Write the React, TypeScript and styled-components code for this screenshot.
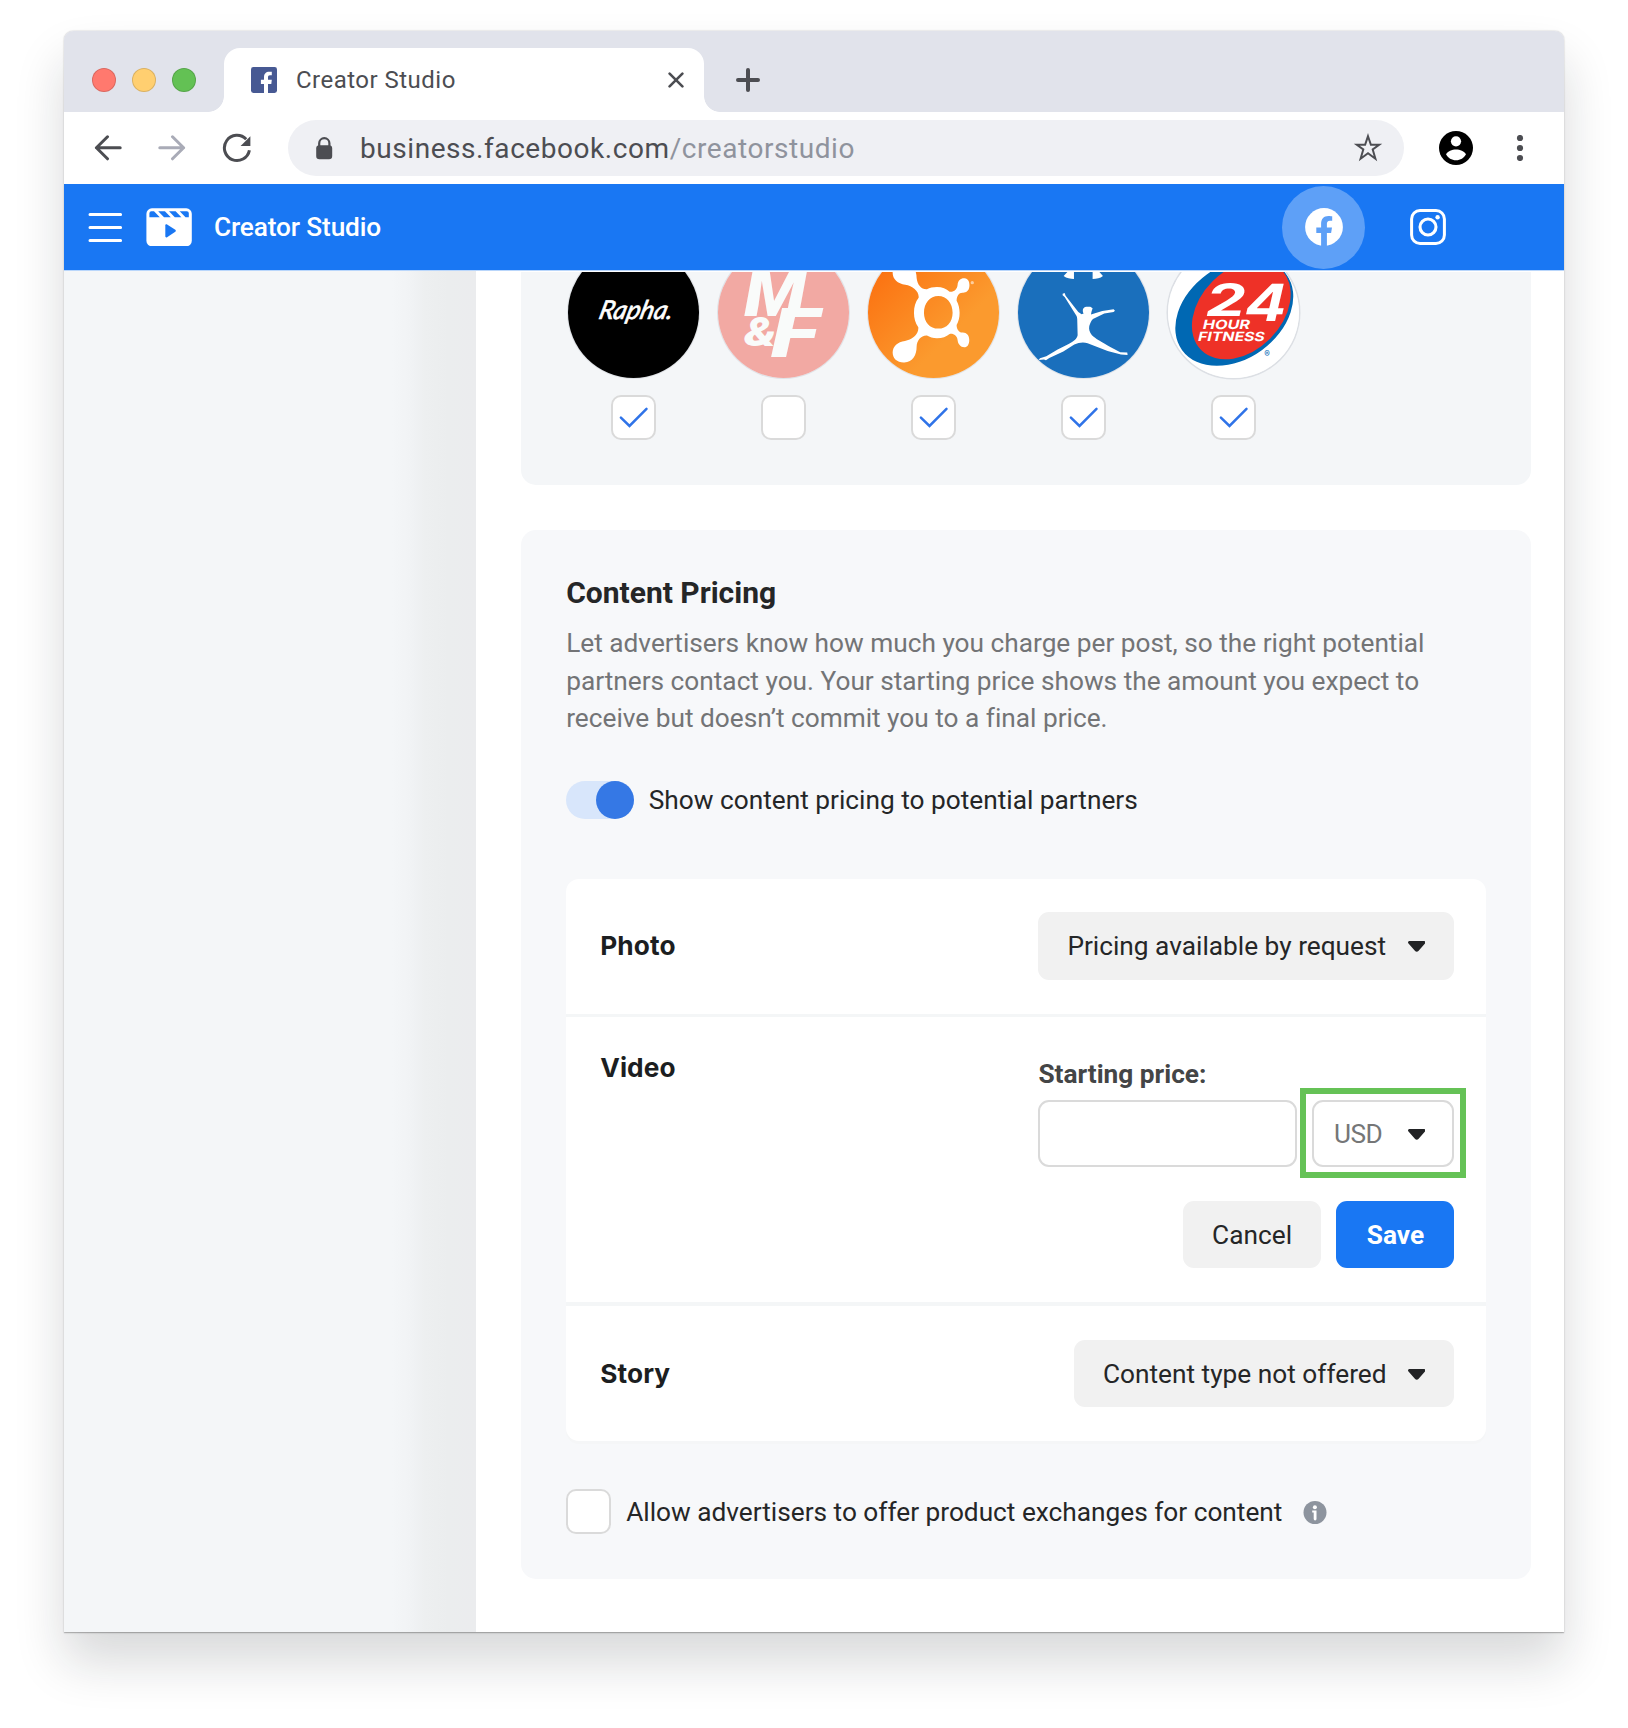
import React from "react";
import styled, { createGlobalStyle, css } from "styled-components";

const GlobalStyle = createGlobalStyle`
  *, *::before, *::after { box-sizing: border-box; }
  html, body { margin: 0; padding: 0; background: #fff; }
  body { font-family: Roboto, "Liberation Sans", sans-serif; color: #252627; overflow: hidden; }
  svg { display: block; flex: none; }
`;

const Page = styled.div`
  width: 1628px;
  height: 1728px;
  padding: 31px 64px 0;
  overflow: hidden;
  background: #fff;
`;

const BrowserWindow = styled.div`
  display: flex;
  flex-direction: column;
  width: 1500px;
  height: 1601px;
  border-radius: 9px 9px 0 0;
  background: #fff;
  box-shadow: 0 0.5px 1.5px rgba(0, 0, 0, 0.32), 0 30px 50px rgba(20, 24, 28, 0.165);
`;

/* ---------- browser chrome ---------- */

const TabStrip = styled.div`
  display: flex;
  height: 81px;
  flex: none;
  padding-top: 17px;
  background: #e1e3eb;
  border-radius: 9px 9px 0 0;
`;

const TrafficLights = styled.div`
  display: flex;
  align-items: center;
  gap: 16px;
  width: 160px;
  padding-left: 28px;
`;

const Light = styled.span<{ $color: string }>`
  width: 24px;
  height: 24px;
  border-radius: 50%;
  background: ${(p) => p.$color};
  border: 1px solid rgba(0, 0, 0, 0.14);
`;

const Tab = styled.div`
  position: relative;
  display: flex;
  align-items: center;
  width: 480px;
  padding: 0 20px 0 27px;
  background: #fff;
  border-radius: 16px 16px 0 0;
  color: #4c4d52;

  &::before,
  &::after {
    content: "";
    position: absolute;
    bottom: 0;
    width: 16px;
    height: 16px;
  }
  &::before {
    left: -16px;
    background: radial-gradient(circle at 0 0, transparent 15.5px, #fff 16.2px);
  }
  &::after {
    right: -16px;
    background: radial-gradient(circle at 100% 0, transparent 15.5px, #fff 16.2px);
  }
`;

const TabTitle = styled.span`
  flex: 1;
  margin-left: 19px;
  font-size: 24px;
  line-height: 30px;
  letter-spacing: 0.48px;
`;

const NewTab = styled.div`
  display: flex;
  align-items: center;
  padding-left: 32px;
`;

const Toolbar = styled.div`
  display: flex;
  align-items: center;
  flex: none;
  height: 72px;
  padding: 0 38px 0 30px;
  background: #fff;
`;

const NavButtons = styled.div`
  display: flex;
  align-items: center;
  gap: 36px;
  width: 194px;
`;

const AddressBar = styled.div`
  display: flex;
  align-items: center;
  width: 1116px;
  height: 56px;
  padding: 0 21px 0 28px;
  border-radius: 28px;
  background: #eff0f4;
`;

const Url = styled.span`
  flex: 1;
  margin: 1px 0 0 27px;
  font-size: 28px;
  line-height: 36px;
  letter-spacing: 0.56px;
  color: #4c4d52;
`;

const UrlPath = styled.span`
  color: #8f939d;
`;

const ToolbarEnd = styled.div`
  display: flex;
  align-items: center;
  justify-content: space-between;
  flex: 1;
  padding-left: 35px;
`;

/* ---------- application header ---------- */

const AppHeader = styled.header`
  display: flex;
  align-items: center;
  flex: none;
  height: 87px;
  padding: 0 118px 0 24px;
  background: #1977f3;
  border-bottom: 1px solid #b9d6fb;
  color: #fff;
`;

const MenuButton = styled.div`
  margin-right: 23px;
`;

const AppTitle = styled.span`
  flex: 1;
  margin-left: 22px;
  font-size: 26.25px;
  font-weight: 500;
  letter-spacing: -0.15px;
`;

const ActiveChannel = styled.div`
  display: flex;
  align-items: center;
  justify-content: center;
  width: 83px;
  height: 83px;
  margin-right: 45px;
  border-radius: 50%;
  background: #5ea0f7;
`;

/* ---------- application body ---------- */

const AppBody = styled.div`
  display: flex;
  flex: 1;
  min-height: 0;
  overflow: hidden;
`;

const Sidebar = styled.aside`
  width: 412px;
  flex: none;
  background: linear-gradient(
    to right,
    #f4f6f8 328px,
    #f1f3f5 346px,
    #edeff0 361px,
    #ebedee 384px,
    #ebecee 100%
  );
`;

const Main = styled.main`
  flex: 1;
  margin-top: 1px;
  padding: 0 32.6px 0 45.2px;
  overflow: hidden;
`;

const BrandPanel = styled.section`
  display: flex;
  gap: 18.75px;
  height: 283px;
  margin-top: -70.3px;
  padding: 45px 47px 45px 46.4px;
  border-radius: 15px;
  background: #f4f6f8;
`;

const Brand = styled.div`
  display: flex;
  flex-direction: column;
  align-items: center;
  gap: 17px;
`;

const BrandLogo = styled.div<{ $ringed?: boolean }>`
  width: 131.25px;
  height: 131.25px;
  border-radius: 50%;
  box-shadow: 0 0 0 ${(p) => (p.$ringed ? "1.5px #dcdfe4" : "1px #e0e3e8")};

  svg {
    width: 100%;
    height: 100%;
    border-radius: 50%;
  }
`;

const CheckboxBox = styled.span`
  display: flex;
  flex: none;
  width: 45px;
  height: 45px;
  border: 2px solid #dadada;
  border-radius: 10px;
  background: #fff;
`;

const PricingPanel = styled.section`
  margin-top: 45.3px;
  height: 1049px;
  padding: 45px;
  border-radius: 15px;
  background: #f7f8fa;
`;

const PanelTitle = styled.h2`
  margin: 0;
  font-size: 30px;
  font-weight: 700;
  line-height: 36px;
`;

const PanelText = styled.p`
  margin: 14px 0 0;
  font-size: 26.25px;
  line-height: 37.5px;
  letter-spacing: -0.01px;
  color: #737476;
  white-space: nowrap;
`;

const ToggleRow = styled.div`
  display: flex;
  align-items: center;
  gap: 15px;
  height: 38px;
  margin-top: 43.5px;
  font-size: 26.25px;
`;

const ToggleTrack = styled.span`
  display: flex;
  justify-content: flex-end;
  width: 67.5px;
  height: 38px;
  border-radius: 19px;
  background: #d8e6fb;
`;

const ToggleKnob = styled.span`
  width: 38px;
  height: 38px;
  border-radius: 50%;
  background: #3578e5;
`;

const PriceTable = styled.div`
  margin-top: 59.5px;
  border-radius: 13px;
  background: #fff;
  box-shadow: 0 3px 0 #f5f6f7;
`;

const PriceRow = styled.div<{ $open?: boolean }>`
  display: flex;
  justify-content: space-between;
  align-items: ${(p) => (p.$open ? "flex-start" : "center")};
  height: ${(p) => (p.$open ? 285 : 135)}px;
  padding: ${(p) => (p.$open ? "36px" : "0")} 32px 0 34px;
`;

const Divider = styled.div`
  height: 3.75px;
  background: #f4f6f7;
`;

const RowLabel = styled.span`
  font-family: Inter, Roboto, sans-serif;
  font-size: 26.25px;
  font-weight: 700;
  line-height: 30px;
  letter-spacing: 0.1px;
  color: #1c1e21;
`;

const buttonBase = css`
  display: flex;
  align-items: center;
  height: 67.5px;
  padding: 0 29px;
  border: 0;
  border-radius: 11px;
  font-family: inherit;
  font-size: 26.25px;
  white-space: nowrap;
`;

const DropdownButton = styled.button<{ $width: number }>`
  ${buttonBase}
  justify-content: space-between;
  width: ${(p) => p.$width}px;
  background: #f1f1f1;
  color: #252627;
`;

const ActionButton = styled.button<{ $primary?: boolean }>`
  ${buttonBase}
  justify-content: center;
  width: ${(p) => (p.$primary ? 118 : 138.7)}px;
  padding: 0;
  background: ${(p) => (p.$primary ? "#1977f3" : "#f1f1f1")};
  color: ${(p) => (p.$primary ? "#fff" : "#252627")};
  font-weight: ${(p) => (p.$primary ? 700 : 400)};
`;

const PriceForm = styled.div`
  width: 416px;
  padding-top: 5.7px;
`;

const FieldLabel = styled.div`
  font-size: 26.25px;
  font-weight: 700;
  line-height: 30px;
  color: #444546;
`;

const FieldRow = styled.div`
  display: flex;
  gap: 15px;
  margin-top: 11px;
`;

const fieldBorder = css`
  height: 67.5px;
  border: 2px solid #dadada;
  border-radius: 11px;
  background: #fff;
`;

const PriceInput = styled.input`
  ${fieldBorder}
  width: 258.5px;
  padding: 0 20px;
  font: inherit;
`;

const CurrencySelect = styled.div`
  ${fieldBorder}
  position: relative;
  display: flex;
  align-items: center;
  justify-content: space-between;
  width: 142.5px;
  padding: 0 27px 0 20px;
  font-size: 26.25px;
  letter-spacing: -0.5px;
  color: #757677;

  &::after {
    content: "";
    position: absolute;
    inset: -13.6px -13.4px -12.6px -14px;
    border: 6px solid #65c256;
  }
`;

const FormActions = styled.div`
  display: flex;
  justify-content: flex-end;
  gap: 15px;
  margin-top: 33.5px;
`;

const ExchangeRow = styled.label`
  display: flex;
  align-items: center;
  margin-top: 48.4px;
  font-size: 26.25px;
`;

const ExchangeText = styled.span`
  margin: 1px 21px 0 15px;
  letter-spacing: -0.01px;
`;

/* ---------- icons ---------- */

const FacebookTile = () => (
  <svg width="26" height="26" viewBox="0 0 26 26">
    <rect width="26" height="26" rx="2.4" fill="#475993" />
    <path
      d="M13 26V16.9H9.9V12.7H13V10.2C13 6.6 15 4.7 18.2 4.7H20.8V8.3H19C17.5 8.3 17 9 17 10.4V12.7H20.8L20.3 16.9H17V26Z"
      fill="#fff"
    />
  </svg>
);

const CloseIcon = () => (
  <svg width="16" height="16" viewBox="0 0 16 16" stroke="#4c4d52" strokeWidth="2.6" strokeLinecap="round">
    <path d="M1.6 1.6L14.4 14.4M14.4 1.6L1.6 14.4" />
  </svg>
);

const PlusIcon = () => (
  <svg width="24" height="24" viewBox="0 0 24 24" stroke="#4c4d52" strokeWidth="4" strokeLinecap="round">
    <path d="M2 12H22M12 2V22" />
  </svg>
);

const ArrowIcon = ({ color, flip }: { color: string; flip?: boolean }) => (
  <svg width="28" height="26" viewBox="0 0 28 26" fill="none" stroke={color} strokeWidth="3" strokeLinecap="round" strokeLinejoin="round">
    <path
      d="M13.5 1.8L2.4 12.8L13.5 23.8M2.4 12.8H26.2"
      transform={flip ? "translate(28 0) scale(-1 1)" : undefined}
    />
  </svg>
);

const ReloadIcon = () => (
  <svg width="30" height="30" viewBox="0 0 30 30">
    <path d="M27.4 17.2A12.6 12.6 0 1 1 24.2 6.3" fill="none" stroke="#4c4d52" strokeWidth="3" />
    <path d="M28.4 3.2V13H18.6Z" fill="#4c4d52" />
  </svg>
);

const LockIcon = () => (
  <svg width="17" height="23" viewBox="0 0 17 23">
    <path d="M3.2 9V6.3a5.1 5.1 0 0 1 10.2 0V9" fill="none" stroke="#4c4d52" strokeWidth="2.2" />
    <rect x="0.2" y="8.3" width="16" height="14" rx="3.2" fill="#4c4d52" />
  </svg>
);

const StarIcon = () => (
  <svg width="30" height="31" viewBox="0 0 30 31">
    <path
      d="M15 3.2L17.9 11.7H26.2L19.7 16.5L22.4 25.7L15 20.3L7.6 25.7L10.3 16.5L3.8 11.7H12.1Z"
      fill="none"
      stroke="#4c4d52"
      strokeWidth="2"
    />
  </svg>
);

const AccountIcon = () => (
  <svg width="34" height="34" viewBox="0 0 34 34">
    <circle cx="17" cy="17" r="17" fill="#000" />
    <circle cx="17" cy="10.3" r="5.1" fill="#fff" />
    <path d="M7 23.2C8.6 20 13 18.4 17 18.4S25.4 20 27 23.2C25 26.9 21.4 29.2 17 29.2S9 26.9 7 23.2Z" fill="#fff" />
  </svg>
);

const DotsIcon = () => (
  <svg width="12" height="26" viewBox="0 0 12 26" fill="#4c4d52">
    <circle cx="6" cy="3" r="3.1" />
    <circle cx="6" cy="13" r="3.1" />
    <circle cx="6" cy="23" r="3.1" />
  </svg>
);

const MenuIcon = () => (
  <svg width="35" height="30" viewBox="0 0 35 30" stroke="#fff" strokeWidth="3" strokeLinecap="round">
    <path d="M2 2.5H32.6M2 15.5H32.6M2 28.5H32.6" />
  </svg>
);

const ClapperIcon = () => (
  <svg width="46" height="38" viewBox="-.4 -.3 46 38">
    <rect width="45.4" height="38" rx="5.5" fill="#fff" />
    <path
      d="M5 3H7.6L13.4 8.9H3V5A2 2 0 0 1 5 3ZM11.8 3H18.5L24.4 8.9H17.6ZM22.6 3H29.2L35 8.9H28.4ZM33.3 3H40.4A2 2 0 0 1 42.4 5V8.9H39.1Z"
      fill="#1977f3"
    />
    <path d="M18.9 17.1C18.9 16.1 19.8 15.6 20.7 16.1L28.9 21.5C29.6 22 29.6 23 28.9 23.5L20.7 28.9C19.8 29.4 18.9 28.9 18.9 27.9Z" fill="#1977f3" />
  </svg>
);

const FacebookRound = () => (
  <svg width="38" height="38" viewBox="0 0 38 38">
    <circle cx="19" cy="19" r="18.9" fill="#fff" />
    <path
      d="M16.1 38V25.1H11.3V19.4H16.1V15.6C16.1 10.6 19 7.9 23.4 7.9C25.3 7.9 27.2 8.3 27.2 8.3V12.7H25C22.5 12.7 21.9 14.2 21.9 15.8V19.4H27L26.1 25.1H21.9V38Z"
      fill="#5ea0f7"
    />
  </svg>
);

const InstagramIcon = () => (
  <svg width="36" height="36" viewBox="0 0 36 36" fill="none" stroke="#fff" strokeWidth="3">
    <rect x="1.6" y="1.6" width="32.8" height="32.8" rx="8.4" />
    <circle cx="18" cy="18" r="8" strokeWidth="3.1" />
    <circle cx="27.6" cy="8.3" r="2.2" fill="#fff" stroke="none" />
  </svg>
);

const Caret = () => (
  <svg width="17.5" height="12" viewBox="0 -1 17.5 12">
    <path
      d="M1.7 0H15.8C17.4 0 18 1.5 17 2.6L10.4 9.9C9.5 10.9 8 10.9 7.1 9.9L.5 2.6C-.5 1.5 .1 0 1.7 0Z"
      fill="#222325"
    />
  </svg>
);

const InfoIcon = () => (
  <svg width="24" height="24" viewBox="0 -.5 24 24">
    <circle cx="12" cy="12" r="11.5" fill="#8d949e" />
    <circle cx="11.9" cy="6.7" r="2" fill="#fff" />
    <path d="M9.2 10H13.5V18.5A1.4 1.4 0 0 1 10.7 18.5V12H9.2Z" fill="#fff" />
  </svg>
);

const Checkbox = ({ checked }: { checked?: boolean }) => (
  <CheckboxBox>
    {checked && (
      <svg width="41" height="41" viewBox="2 2 41 41">
        <path d="M9.9 22.6L18.5 31L35.5 13.9" fill="none" stroke="#2f73e8" strokeWidth="2.5" strokeLinecap="round" />
      </svg>
    )}
  </CheckboxBox>
);

/* ---------- brand logos, drawn around a centre of 0,0 ---------- */

const LOGO_BOX = "-197 -197 394 394";

const RaphaLogo = () => (
  <svg viewBox={LOGO_BOX}>
    <rect x="-197" y="-197" width="394" height="394" fill="#000" />
    <text
      transform="translate(-108 18) skewX(-14)"
      fontFamily="Lato, sans-serif"
      fontStyle="italic"
      fontSize="78"
      fontWeight="400"
      fill="#fff"
      stroke="#fff"
      strokeWidth="2"
      textLength="222"
      lengthAdjust="spacingAndGlyphs"
    >
      Rapha.
    </text>
  </svg>
);

const MuscleLogo = () => (
  <svg viewBox={LOGO_BOX} fontFamily="Roboto, sans-serif" fontWeight="900" fontStyle="italic" fill="#f9fbfa">
    <rect x="-197" y="-197" width="394" height="394" fill="#f2a9a3" />
    <text x="-118" y="9" fontSize="206" textLength="186" lengthAdjust="spacingAndGlyphs">M</text>
    <text x="-38" y="134" fontSize="204" textLength="142" lengthAdjust="spacingAndGlyphs">F</text>
    <text x="-119" y="100" fontSize="124" textLength="98" lengthAdjust="spacingAndGlyphs">&amp;</text>
  </svg>
);

const OrangeLogo = () => (
  <svg viewBox={LOGO_BOX}>
    <defs>
      <linearGradient id="orange" x1="0" y1="0" x2="1" y2="1">
        <stop offset="0.1" stopColor="#fb7010" />
        <stop offset="0.65" stopColor="#fb9a2e" />
      </linearGradient>
    </defs>
    <rect x="-197" y="-197" width="394" height="394" fill="url(#orange)" />
    <g fill="#fff">
      <path
        fillRule="evenodd"
        d="M10 -77C26 -77 38 -72 48 -63C60 -61 71 -70 72 -84C73 -97 82 -104 93 -103C106 -101 109 -89 107 -76C105 -64 96 -59 86 -60C76 -60 69 -50 69 -36C75 -25 78 -12 78 0C78 14 75 26 69 37C69 50 76 59 86 60C98 59 107 68 107 82C107 96 101 104 92 104C81 104 73 94 72 83C71 70 60 62 48 64C38 72 26 77 10 77C-2 77 -12 74 -20 69C-38 68 -50 84 -51 102C-51 128 -62 149 -88 150C-109 151 -123 138 -123 120C-123 101 -108 88 -86 85C-66 81 -44 66 -46 44C-55 31 -59 16 -59 0C-59 -17 -55 -32 -45 -45C-43 -64 -63 -81 -85 -84C-108 -87 -123 -101 -123 -120C-123 -140 -108 -152 -86 -150C-62 -148 -51 -126 -51 -104C-49 -84 -37 -69 -20 -70C-12 -75 -2 -77 10 -77ZM14 -50C-11 -50 -29 -28 -29 0S-11 48 14 48S57 28 57 0S39 -50 14 -50Z"
      />
      <circle cx="116" cy="-90" r="5" opacity="0.55" />
    </g>
  </svg>
);

const LeapLogo = () => (
  <svg viewBox={LOGO_BOX}>
    <rect x="-197" y="-197" width="394" height="394" fill="#1a6fbc" />
    <g fill="#fff">
      <path d="M-60 -110L-43 -128H-29V-101C-40 -101 -51 -103 -60 -110ZM58 -110L42 -128H27V-101C39 -101 50 -103 58 -110Z" />
      <path d="M-63 -57L-57 -59L-54 -51L-16 -2L-6 5L0 3C-5 -8 -2 -16 8 -18L20 -18L27 -13L24 -4L22 6L56 -5L90 -10L94 -6L90 -2L62 3L28 19C22 25 20 32 17 40C15 51 18 58 25 68C35 78 55 89 80 103L110 119L131 120L132 127L112 126L72 115L12 92C-1 88 -15 90 -28 96L-61 117L-103 136L-113 143L-119 141L-135 142L-131 137L-112 131L-78 111L-45 94C-30 87 -20 79 -18 68L-19 28C-19 18 -19 12 -24 6L-57 -47L-63 -52Z" />
    </g>
  </svg>
);

const FitnessLogo = () => (
  <svg viewBox={LOGO_BOX} fontFamily="Inter, sans-serif" fontWeight="700" fill="#fff">
    <rect x="-197" y="-197" width="394" height="394" fill="#fff" />
    <ellipse rx="193.6" ry="140.5" transform="translate(2 -1) rotate(-36)" fill="#0068b3" />
    <ellipse rx="170.5" ry="122" transform="translate(23 -8) rotate(-45)" fill="#ee3127" />
    <text transform="translate(-92 9) skewX(-13)" fontSize="134" textLength="120" lengthAdjust="spacingAndGlyphs">2</text>
    <text transform="translate(24 24) skewX(-13)" fontSize="154" textLength="126" lengthAdjust="spacingAndGlyphs">4</text>
    <text transform="translate(-95 50) skewX(-13)" fontSize="38" textLength="142" lengthAdjust="spacingAndGlyphs">HOUR</text>
    <text transform="translate(-109 86) skewX(-13)" fontSize="38" textLength="200" lengthAdjust="spacingAndGlyphs">FITNESS</text>
    <text x="92" y="133" fontSize="25" fontWeight="500" fill="#0068b3">®</text>
  </svg>
);

const brands = [
  { name: "rapha", Logo: RaphaLogo, checked: true },
  { name: "muscle", Logo: MuscleLogo, checked: false },
  { name: "orange", Logo: OrangeLogo, checked: true },
  { name: "leap", Logo: LeapLogo, checked: true },
  { name: "fitness", Logo: FitnessLogo, checked: true, ringed: true },
];

export default function App() {
  return (
    <>
      <GlobalStyle />
      <Page>
        <BrowserWindow>
          <TabStrip>
            <TrafficLights>
              <Light $color="#ff796e" />
              <Light $color="#ffcf70" />
              <Light $color="#63c154" />
            </TrafficLights>
            <Tab>
              <FacebookTile />
              <TabTitle>Creator Studio</TabTitle>
              <CloseIcon />
            </Tab>
            <NewTab>
              <PlusIcon />
            </NewTab>
          </TabStrip>

          <Toolbar>
            <NavButtons>
              <ArrowIcon color="#4c4d52" />
              <ArrowIcon color="#a9abb7" flip />
              <ReloadIcon />
            </NavButtons>
            <AddressBar>
              <LockIcon />
              <Url>
                business.facebook.com<UrlPath>/creatorstudio</UrlPath>
              </Url>
              <StarIcon />
            </AddressBar>
            <ToolbarEnd>
              <AccountIcon />
              <DotsIcon />
            </ToolbarEnd>
          </Toolbar>

          <AppHeader>
            <MenuButton>
              <MenuIcon />
            </MenuButton>
            <ClapperIcon />
            <AppTitle>Creator Studio</AppTitle>
            <ActiveChannel>
              <FacebookRound />
            </ActiveChannel>
            <InstagramIcon />
          </AppHeader>

          <AppBody>
            <Sidebar />
            <Main>
              <BrandPanel>
                {brands.map(({ name, Logo, checked, ringed }) => (
                  <Brand key={name}>
                    <BrandLogo $ringed={ringed}>
                      <Logo />
                    </BrandLogo>
                    <Checkbox checked={checked} />
                  </Brand>
                ))}
              </BrandPanel>

              <PricingPanel>
                <PanelTitle>Content Pricing</PanelTitle>
                <PanelText>
                  Let advertisers know how much you charge per post, so the right potential
                  <br />
                  partners contact you. Your starting price shows the amount you expect to
                  <br />
                  receive but doesn’t commit you to a final price.
                </PanelText>
                <ToggleRow>
                  <ToggleTrack>
                    <ToggleKnob />
                  </ToggleTrack>
                  <span>Show content pricing to potential partners</span>
                </ToggleRow>

                <PriceTable>
                  <PriceRow>
                    <RowLabel>Photo</RowLabel>
                    <DropdownButton $width={416}>
                      Pricing available by request
                      <Caret />
                    </DropdownButton>
                  </PriceRow>
                  <Divider />
                  <PriceRow $open>
                    <RowLabel>Video</RowLabel>
                    <PriceForm>
                      <FieldLabel>Starting price:</FieldLabel>
                      <FieldRow>
                        <PriceInput />
                        <CurrencySelect>
                          USD
                          <Caret />
                        </CurrencySelect>
                      </FieldRow>
                      <FormActions>
                        <ActionButton>Cancel</ActionButton>
                        <ActionButton $primary>Save</ActionButton>
                      </FormActions>
                    </PriceForm>
                  </PriceRow>
                  <Divider />
                  <PriceRow>
                    <RowLabel>Story</RowLabel>
                    <DropdownButton $width={380.5}>
                      Content type not offered
                      <Caret />
                    </DropdownButton>
                  </PriceRow>
                </PriceTable>

                <ExchangeRow>
                  <Checkbox />
                  <ExchangeText>Allow advertisers to offer product exchanges for content</ExchangeText>
                  <InfoIcon />
                </ExchangeRow>
              </PricingPanel>
            </Main>
          </AppBody>
        </BrowserWindow>
      </Page>
    </>
  );
}
